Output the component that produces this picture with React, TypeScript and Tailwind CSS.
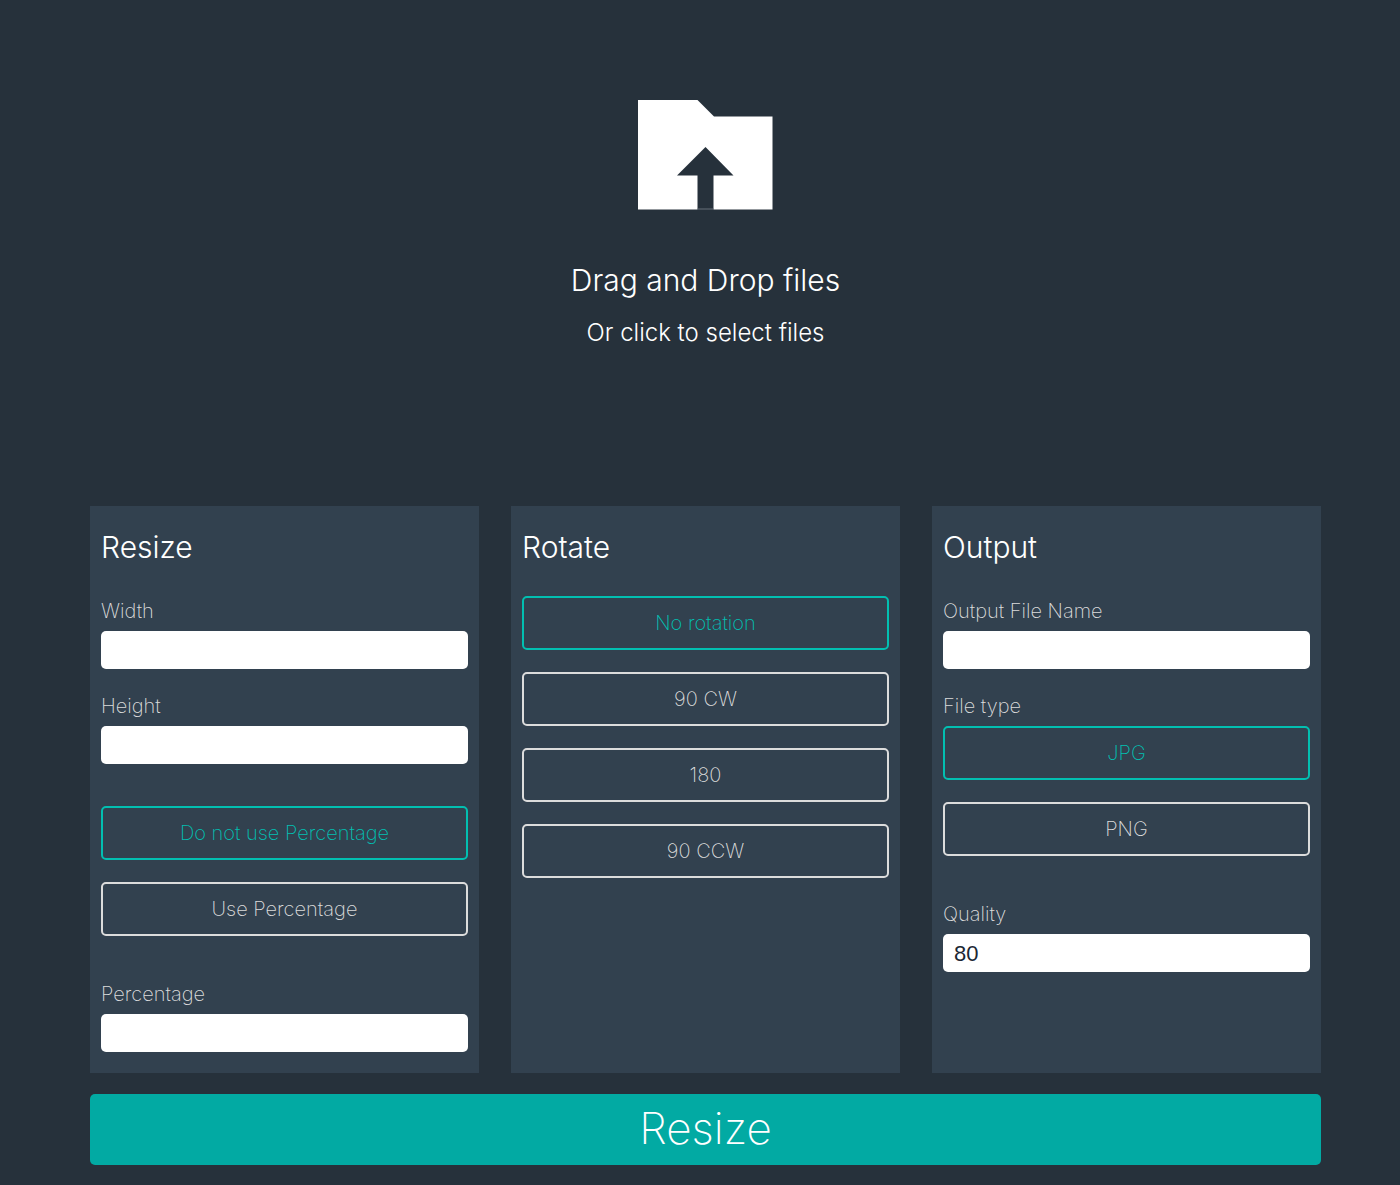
import { useId, useState } from "react";

function Field({ label, defaultValue = "", type = "text" }: { label: string; defaultValue?: string; type?: string }) {
  const id = useId();
  return (
    <div className="flex flex-col gap-2">
      <label htmlFor={id} className="text-[20px] leading-6 font-extralight text-[#dcdcdc]">
        {label}
      </label>
      <input
        id={id}
        type={type}
        defaultValue={defaultValue}
        className="h-[38px] w-full rounded-[5px] bg-white px-[11px] pt-[2px] font-['Liberation_Sans',sans-serif] text-[22px] text-[#1b2733] outline-none focus-visible:ring-2 focus-visible:ring-[#02bfb1]"
      />
    </div>
  );
}

function Choices({ label, options }: { label: string; options: string[] }) {
  const [selected, setSelected] = useState(options[0]);
  return (
    <div role="group" aria-label={label} className="flex flex-col gap-[22px]">
      {options.map((option) => (
        <button
          key={option}
          type="button"
          aria-pressed={option === selected}
          onClick={() => setSelected(option)}
          className={
            "h-[54px] w-full cursor-pointer rounded-[5px] border-2 text-[20px] leading-6 font-extralight " +
            (option === selected ? "border-[#02bfb1] text-[#02bfb1]" : "border-[#dcdcdc] text-[#dcdcdc]")
          }
        >
          {option}
        </button>
      ))}
    </div>
  );
}

function Panel({ title, children }: { title: string; children: React.ReactNode }) {
  return (
    <section className="bg-[#32414f] px-[11px] py-[21px]">
      <h2 className="text-[30px] leading-10 font-light text-white">{title}</h2>
      {children}
    </section>
  );
}

function FolderUpload() {
  return (
    <svg viewBox="0 0 135 110" className="w-[135px]" fill="none" aria-hidden="true">
      <path d="M0 0H59.500L76 16.500H134.500V109.500H75.500V75.500H95.500L67.500 47L39 75.500H59.500V109.500H0Z" fill="#fff" />
      <path d="M59.500 109H75.500" stroke="#66707a" />
    </svg>
  );
}

export default function App() {
  return (
    <main className="min-h-screen bg-[#26313b] pr-[79px] pb-[20px] pl-[90px] font-['Inter','Liberation_Sans',sans-serif]">
      <button
        type="button"
        className="flex w-full cursor-pointer flex-col items-center pt-[100px] pb-[157px] text-white"
      >
        <FolderUpload />
        <span className="mt-[50px] text-[30px] leading-10 font-light">Drag and Drop files</span>
        <span className="mt-[17px] text-[24px] leading-8 font-light">Or click to select files</span>
      </button>

      <form onSubmit={(event) => event.preventDefault()}>
        <div className="grid grid-cols-3 gap-8">
          <Panel title="Resize">
            <div className="mt-8 flex flex-col gap-[25px]">
              <Field label="Width" />
              <Field label="Height" />
            </div>
            <div className="mt-[42px] mb-[46px]">
              <Choices label="Percentage mode" options={["Do not use Percentage", "Use Percentage"]} />
            </div>
            <Field label="Percentage" />
          </Panel>

          <Panel title="Rotate">
            <div className="mt-[29px]">
              <Choices label="Rotation" options={["No rotation", "90 CW", "180", "90 CCW"]} />
            </div>
          </Panel>

          <Panel title="Output">
            <div className="mt-8">
              <Field label="Output File Name" />
            </div>
            <p className="mt-[25px] mb-2 text-[20px] leading-6 font-extralight text-[#dcdcdc]">File type</p>
            <Choices label="File type" options={["JPG", "PNG"]} />
            <div className="mt-[46px]">
              <Field label="Quality" defaultValue="80" />
            </div>
          </Panel>
        </div>

        <button
          type="submit"
          className="mt-[21px] h-[71px] w-full cursor-pointer rounded-[5px] bg-[#02aaa3] pb-1 text-[44px] leading-none font-extralight text-white"
        >
          Resize
        </button>
      </form>
    </main>
  );
}
